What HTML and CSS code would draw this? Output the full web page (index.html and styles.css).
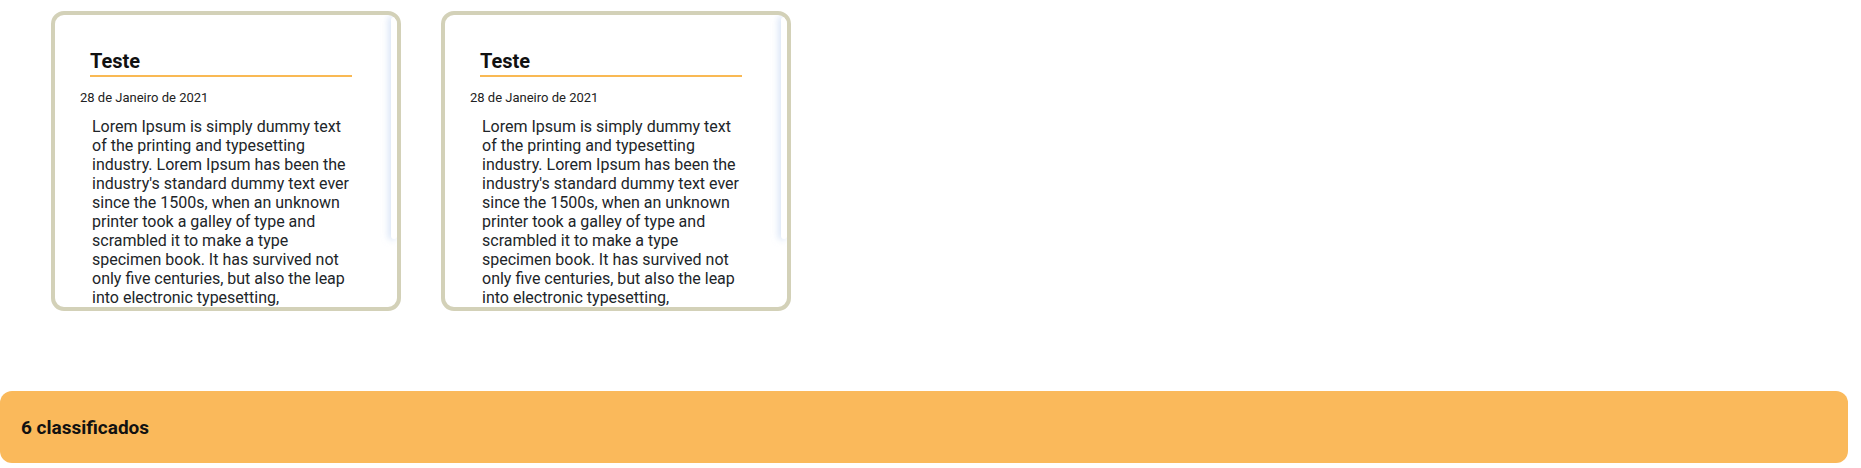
FILE: index.html
```
<!DOCTYPE html>
<html lang="pt">
<head>
<meta charset="utf-8">
<title>Classificados</title>
<link rel="stylesheet" href="styles.css">
</head>
<body>
<div class="page">
  <div class="cards">
    <article class="card">
      <div class="card-scroll">
        <h2 class="card-title">Teste</h2>
        <p class="card-date">28 de Janeiro de 2021</p>
        <p class="card-text">Lorem Ipsum is simply dummy text of the printing and typesetting industry. Lorem Ipsum has been the industry's standard dummy text ever since the 1500s, when an unknown printer took a galley of type and scrambled it to make a type specimen book. It has survived not only five centuries, but also the leap into electronic typesetting, remaining essentially unchanged.</p>
      </div>
      <span class="scroll-thumb" aria-hidden="true"></span>
    </article>
    <article class="card">
      <div class="card-scroll">
        <h2 class="card-title">Teste</h2>
        <p class="card-date">28 de Janeiro de 2021</p>
        <p class="card-text">Lorem Ipsum is simply dummy text of the printing and typesetting industry. Lorem Ipsum has been the industry's standard dummy text ever since the 1500s, when an unknown printer took a galley of type and scrambled it to make a type specimen book. It has survived not only five centuries, but also the leap into electronic typesetting, remaining essentially unchanged.</p>
      </div>
      <span class="scroll-thumb" aria-hidden="true"></span>
    </article>
  </div>
  <div class="summary">6 classificados</div>
</div>
</body>
</html>
```

FILE: styles.css
```
html, body {
  margin: 0;
  padding: 0;
  background: #ffffff;
  font-family: Roboto, "Liberation Sans", Arial, sans-serif;
}

.page {
  padding-top: 11px;
}

.cards {
  display: flex;
  gap: 40px;
  padding-left: 51px;
}

.card {
  position: relative;
  width: 350px;
  height: 300px;
  box-sizing: border-box;
  border: 4px solid #d3d1b8;
  border-radius: 13px;
  overflow: hidden;
  background: #ffffff;
}

.card-scroll {
  height: 100%;
  box-sizing: border-box;
  overflow-y: auto;
  scrollbar-width: none;
  padding: 35px 0 70px 0;
}

.card-scroll::-webkit-scrollbar {
  display: none;
}

.scroll-thumb {
  position: absolute;
  top: 2px;
  right: 0;
  width: 6px;
  height: 222px;
  background: #ffffff;
  border-radius: 4px;
  box-shadow: -2px 0 6px 1px rgba(190, 210, 240, 0.55);
}

.card-title {
  margin: 0 0 0 35px;
  width: 262px;
  font-size: 20px;
  line-height: 23px;
  font-weight: 700;
  color: #111111;
  padding-bottom: 2px;
  border-bottom: 2px solid #f9b954;
}

.card-date {
  margin: 13px 0 0 25px;
  font-size: 13px;
  line-height: 15px;
  color: #222222;
}

.card-text {
  margin: 12px 0 0 37px;
  width: 258px;
  font-size: 16px;
  line-height: 19px;
  color: #212529;
}

.summary {
  margin: 80px 13px 0 0;
  height: 72px;
  box-sizing: border-box;
  padding-left: 21px;
  display: flex;
  align-items: center;
  background: #fab95b;
  border-radius: 12px;
  font-size: 19px;
  font-weight: 700;
  color: #111111;
}
```
